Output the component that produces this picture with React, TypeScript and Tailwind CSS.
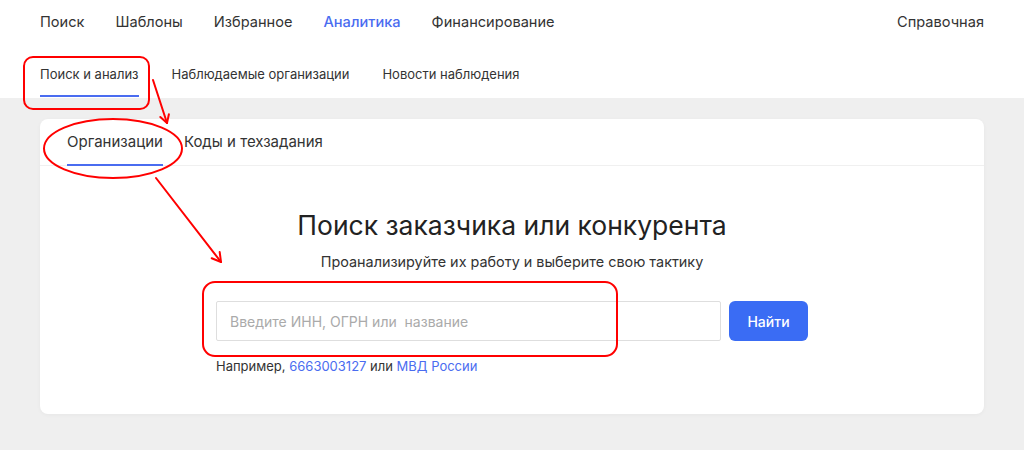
import React from "react";

const topNav = ["Поиск", "Шаблоны", "Избранное", "Аналитика", "Финансирование"];
const subNav = ["Поиск и анализ", "Наблюдаемые организации", "Новости наблюдения"];

const Annotations: React.FC = () => (
    <svg
        className="absolute left-0 top-0 pointer-events-none"
        width="1024"
        height="450"
        viewBox="0 0 1024 450"
        fill="none"
        stroke="#ff0000"
        strokeWidth="2"
        strokeLinecap="round"
        strokeLinejoin="round"
    >
        <rect x="24" y="57" width="125" height="52" rx="9" />
        <line x1="153" y1="80" x2="167" y2="123" />
        <polyline points="160.3,117 167,123 168.9,114.2" />
        <ellipse cx="113" cy="148.5" rx="69" ry="29.5" />
        <line x1="156" y1="178" x2="221" y2="262" />
        <polyline points="211.7,258.2 221,262 219.7,252.1" />
        <rect x="203" y="282" width="414" height="74" rx="12" />
    </svg>
);

const App: React.FC = () => {
    return (
        <div className="relative min-h-[450px] bg-[#efefef] font-['Inter','Noto_Sans',sans-serif] text-[#333]">
            {/* Header */}
            <header className="bg-white h-[98px] px-10">
                <div className="flex items-center justify-between h-[45px] text-[14.6px]">
                    <nav className="flex gap-[31px]">
                        {topNav.map((item) => (
                            <span
                                key={item}
                                className={item === "Аналитика" ? "text-[#4a6cf0] font-medium" : "text-[#333]"}
                            >
                                {item}
                            </span>
                        ))}
                    </nav>
                    <span>Справочная</span>
                </div>
                <div className="flex gap-[33px] text-[13px] leading-[18px]">
                    {subNav.map((item, i) => (
                        <span
                            key={item}
                            className={
                                i === 0
                                    ? "pt-[20px] pb-[12px] border-b-2 border-[#4a6cf0] text-[#333]"
                                    : "pt-[20px] pb-[12px] border-b-2 border-transparent text-[#333]"
                            }
                        >
                            {item}
                        </span>
                    ))}
                </div>
            </header>

            {/* Card */}
            <div className="px-10 pt-[21px]">
                <div className="bg-white rounded-lg shadow-[0_1px_4px_rgba(0,0,0,0.04)]">
                    <div className="flex gap-[21px] px-[27px] border-b border-[#f0f0f0] text-[15px] leading-5">
                        <span className="pt-[13px] pb-[12px] border-b-2 border-[#4a6cf0] -mb-px">Организации</span>
                        <span className="pt-[13px] pb-[12px] border-b-2 border-transparent -mb-px">Коды и техзадания</span>
                    </div>

                    <div className="flex flex-col items-center pt-[43px] pb-[39px]">
                        <h1 className="text-[26.5px] leading-8 text-[#222]">Поиск заказчика или конкурента</h1>
                        <p className="mt-[11px] text-[14.4px] leading-5 text-[#333]">
                            Проанализируйте их работу и выберите свою тактику
                        </p>

                        <div className="mt-[29px] w-[592px]">
                            <div className="flex gap-2">
                                <input
                                    className="w-[505px] h-10 border border-[#dedede] rounded-[2px] px-[13px] text-[14px] outline-none placeholder:text-[#aaaaaa]"
                                    placeholder="Введите ИНН, ОГРН или  название"
                                />
                                <button className="w-[79px] h-10 rounded-md bg-[#3a6cf4] text-white text-[14px] font-medium">
                                    Найти
                                </button>
                            </div>
                            <p className="mt-4 text-[13px] leading-[18px] text-[#333]">
                                Например, <span className="text-[#4a6cf0]">6663003127</span> или{" "}
                                <span className="text-[#4a6cf0]">МВД России</span>
                            </p>
                        </div>
                    </div>
                </div>
            </div>

            <Annotations />
        </div>
    );
};

export default App;
